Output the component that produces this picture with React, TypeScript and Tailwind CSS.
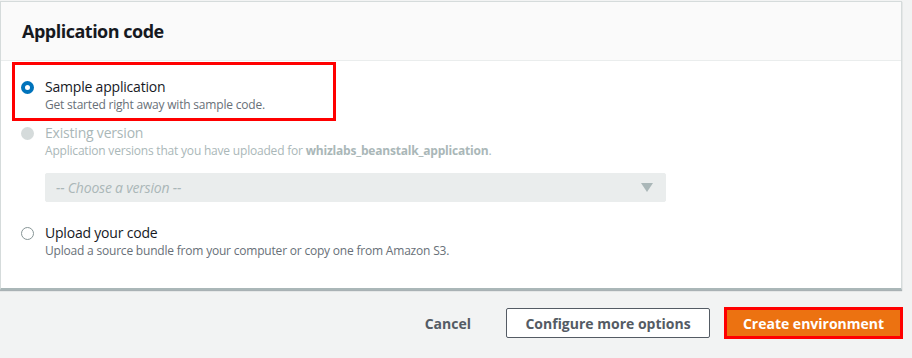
import React from "react";

function Radio({ state }: { state: "checked" | "disabled" | "empty" }) {
  if (state === "checked")
    return <span className="block w-[13px] h-[13px] rounded-full border-[4px] border-[#0073bb] bg-white" />;
  if (state === "disabled")
    return <span className="block w-[13px] h-[13px] rounded-full bg-[#d5dbdb]" />;
  return <span className="block w-[13px] h-[13px] rounded-full border border-[#879596] bg-white" />;
}

export default function App() {
  return (
    <div className="w-[912px] h-[358px] bg-[#f2f3f3] pt-[1px] overflow-hidden" style={{ fontFamily: '"Open Sans", "Noto Sans", Arial, sans-serif' }}>
      <div className="w-[902px] h-[289px] bg-white border border-[#d5dbdb] border-b-[#aab7b8] border-b-2 shadow-[0_1px_1px_rgba(0,28,36,0.3)] flex flex-col">
        <div className="h-[59px] bg-[#fafafa] border-b border-[#eaeded] flex items-center px-[21px]">
          <h2 className="text-[18px] font-bold text-[#16191f] leading-none tracking-[-0.5px]">Application code</h2>
        </div>
        <div className="px-[11px] pt-[1px] flex flex-col tracking-[-0.2px]">
          <div className="w-[324px] h-[59px] border-[3px] border-[#ff0000] flex items-start pl-[6px] pt-[12px] gap-[11px]">
            <div className="pt-[4px]"><Radio state="checked" /></div>
            <div className="flex flex-col">
              <span className="text-[14px] leading-[19px] text-[#16191f]">Sample application</span>
              <span className="text-[12px] leading-[18px] text-[#687078]">Get started right away with sample code.</span>
            </div>
          </div>
          <div className="flex items-start pl-[9px] pt-[2px] gap-[11px]">
            <div className="pt-[4px]"><Radio state="disabled" /></div>
            <div className="flex flex-col">
              <span className="text-[14px] leading-[19px] text-[#aab7b8]">Existing version</span>
              <span className="text-[12px] leading-[18px] text-[#aab7b8]">
                Application versions that you have uploaded for <b className="font-bold">whizlabs_beanstalk_application</b>.
              </span>
              <div className="mt-[13px] w-[621px] h-[29px] bg-[#eaeded] border border-[#eaeded] rounded-[2px] flex items-center justify-between pl-[10px] pr-[12px]">
                <span className="text-[14px] italic text-[#aab7b8]">-- Choose a version --</span>
                <svg width="12" height="9" viewBox="0 0 12 9"><path d="M0 0 L12 0 L6 9 Z" fill="#aab7b8" /></svg>
              </div>
            </div>
          </div>
          <div className="flex items-start pl-[9px] pt-[21px] gap-[11px]">
            <div className="pt-[4px]"><Radio state="empty" /></div>
            <div className="flex flex-col">
              <span className="text-[14px] leading-[19px] text-[#16191f]">Upload your code</span>
              <span className="text-[12px] leading-[18px] text-[#687078]">Upload a source bundle from your computer or copy one from Amazon S3.</span>
            </div>
          </div>
        </div>
      </div>
      <div className="flex items-center justify-end pr-[9px] pt-[17px]">
        <span className="text-[14px] font-bold text-[#545b64] mr-[35px]">Cancel</span>
        <div className="w-[204px] h-[30px] border border-[#545b64] bg-white rounded-[2px] flex items-center justify-center text-[14px] font-bold text-[#545b64] mr-[14px]">
          Configure more options
        </div>
        <div className="w-[179px] h-[32px] border-[3px] border-[#ff0000] bg-[#ec7211] flex items-center justify-center text-[14px] font-bold text-white">
          Create environment
        </div>
      </div>
    </div>
  );
}
